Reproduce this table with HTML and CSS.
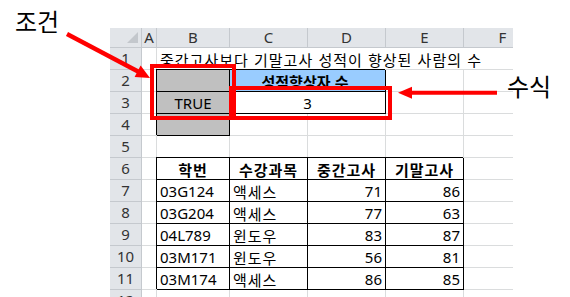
FILE: index.html
```html
<!DOCTYPE html>
<html lang="ko">
<head>
<meta charset="utf-8">
<title>조건 / 수식</title>
<link rel="stylesheet" href="styles.css">
</head>
<body>
<div class="page">
  <div class="sheet">
    <div class="hd corner"><span class="tri"></span></div>
    <div class="hd col">A</div>
    <div class="hd col">B</div>
    <div class="hd col">C</div>
    <div class="hd col">D</div>
    <div class="hd col">E</div>
    <div class="hd col">F</div>

    <div class="hd row">1</div>
    <div class="c"></div>
    <div class="c title ko">중간고사보다 기말고사 성적이 향상된 사람의 수</div>

    <div class="hd row">2</div>
    <div class="c"></div>
    <div class="c b gray"></div>
    <div class="c b blue span2 ko">성적향상자 수</div>
    <div class="c"></div>
    <div class="c"></div>

    <div class="hd row">3</div>
    <div class="c"></div>
    <div class="c b gray mid">TRUE</div>
    <div class="c b span2 mid">3</div>
    <div class="c"></div>
    <div class="c"></div>

    <div class="hd row">4</div>
    <div class="c"></div>
    <div class="c b gray"></div>
    <div class="c"></div>
    <div class="c"></div>
    <div class="c"></div>
    <div class="c"></div>

    <div class="hd row">5</div>
    <div class="c"></div><div class="c"></div><div class="c"></div><div class="c"></div><div class="c"></div><div class="c"></div>

    <div class="hd row">6</div>
    <div class="c"></div>
    <div class="c b th ko">학번</div>
    <div class="c b th ko">수강과목</div>
    <div class="c b th ko">중간고사</div>
    <div class="c b th ko">기말고사</div>
    <div class="c"></div>

    <div class="hd row">7</div>
    <div class="c"></div>
    <div class="c b">03G124</div>
    <div class="c b ko">액세스</div>
    <div class="c b num">71</div>
    <div class="c b num">86</div>
    <div class="c"></div>

    <div class="hd row">8</div>
    <div class="c"></div>
    <div class="c b">03G204</div>
    <div class="c b ko">액세스</div>
    <div class="c b num">77</div>
    <div class="c b num">63</div>
    <div class="c"></div>

    <div class="hd row">9</div>
    <div class="c"></div>
    <div class="c b">04L789</div>
    <div class="c b ko">윈도우</div>
    <div class="c b num">83</div>
    <div class="c b num">87</div>
    <div class="c"></div>

    <div class="hd row">10</div>
    <div class="c"></div>
    <div class="c b">03M171</div>
    <div class="c b ko">윈도우</div>
    <div class="c b num">56</div>
    <div class="c b num">81</div>
    <div class="c"></div>

    <div class="hd row">11</div>
    <div class="c"></div>
    <div class="c b">03M174</div>
    <div class="c b ko">액세스</div>
    <div class="c b num">86</div>
    <div class="c b num">85</div>
    <div class="c"></div>

    <div class="hd row">12</div>
    <div class="c"></div><div class="c"></div><div class="c"></div><div class="c"></div><div class="c"></div><div class="c"></div>
  </div>

  <div class="label label-cond">조건</div>
  <div class="label label-formula">수식</div>
  <div class="mark mark-cond"></div>
  <div class="mark mark-formula"></div>
  <svg class="arrows" width="570" height="297" viewBox="0 0 570 297">
    <line x1="67" y1="34" x2="139" y2="72" stroke="#ff0000" stroke-width="4.5"/>
    <polygon points="150,78 134.6,76.9 140.6,65.6" fill="#ff0000"/>
    <line x1="497" y1="92.7" x2="410" y2="92.7" stroke="#ff0000" stroke-width="4"/>
    <polygon points="398,92.7 412,86.7 412,98.7" fill="#ff0000"/>
  </svg>
</div>
</body>
</html>
```

FILE: styles.css
```css
html, body {
  margin: 0;
  padding: 0;
  width: 570px;
  height: 297px;
  overflow: hidden;
  background: #ffffff;
}

body {
  font-family: "Noto Sans", "Noto Sans CJK KR", sans-serif;
  font-size: 15px;
  color: #000;
}

.page {
  position: relative;
  width: 570px;
  height: 297px;
  padding: 28px 0 0 110px;
  box-sizing: border-box;
}

.sheet {
  width: 403px;
  height: 269px;
  overflow: hidden;
  display: grid;
  grid-template-columns: 32px 15px 73px 78px 78px 78px 78px;
  grid-template-rows: 20px;
  grid-auto-rows: 22px;
  background: #fff;
}

.hd {
  background: #e2e5e9;
  color: #333;
  box-sizing: border-box;
  border-right: 1px solid #c5c9ce;
  border-bottom: 1px solid #c5c9ce;
  display: flex;
  align-items: center;
  justify-content: center;
  line-height: 1;
}

.corner {
  justify-content: flex-end;
  align-items: flex-end;
  padding: 0 3px 4px 0;
}

.tri {
  width: 0;
  height: 0;
  border-left: 11px solid transparent;
  border-bottom: 11px solid #c3c7cc;
}

.c {
  box-sizing: border-box;
  border-right: 1px solid #dadcdd;
  border-bottom: 1px solid #dadcdd;
  display: flex;
  align-items: center;
  padding: 1px 3px 0 3px;
  white-space: nowrap;
  line-height: 1;
}

.ko {
  font-family: "Noto Sans CJK KR", sans-serif;
  letter-spacing: 1px;
}

.title {
  grid-column: span 5;
  border-right: none;
}

.b {
  border-right-color: #000;
  border-bottom-color: #000;
  box-shadow: -1px -1px 0 #000;
}

.span2 {
  grid-column: span 2;
}

.gray {
  background: #c0c0c0;
}

.blue {
  background: #99ccff;
  font-weight: 700;
  justify-content: center;
  letter-spacing: 0;
  padding-right: 8px;
}

.mid {
  justify-content: center;
}

.th {
  font-weight: 700;
  justify-content: center;
}

.num {
  justify-content: flex-end;
}

.label {
  position: absolute;
  font-family: "Noto Sans CJK KR", sans-serif;
  font-size: 24px;
  line-height: 1;
  color: #000;
}

.label-cond {
  left: 15px;
  top: 9px;
}

.label-formula {
  left: 507px;
  top: 74px;
}

.mark {
  position: absolute;
  border: 4px solid #ff0000;
  box-sizing: border-box;
}

.mark-cond {
  left: 150px;
  top: 64px;
  width: 86px;
  height: 56px;
}

.mark-formula {
  left: 229px;
  top: 86px;
  width: 163px;
  height: 34px;
}

.arrows {
  position: absolute;
  left: 0;
  top: 0;
}
```
